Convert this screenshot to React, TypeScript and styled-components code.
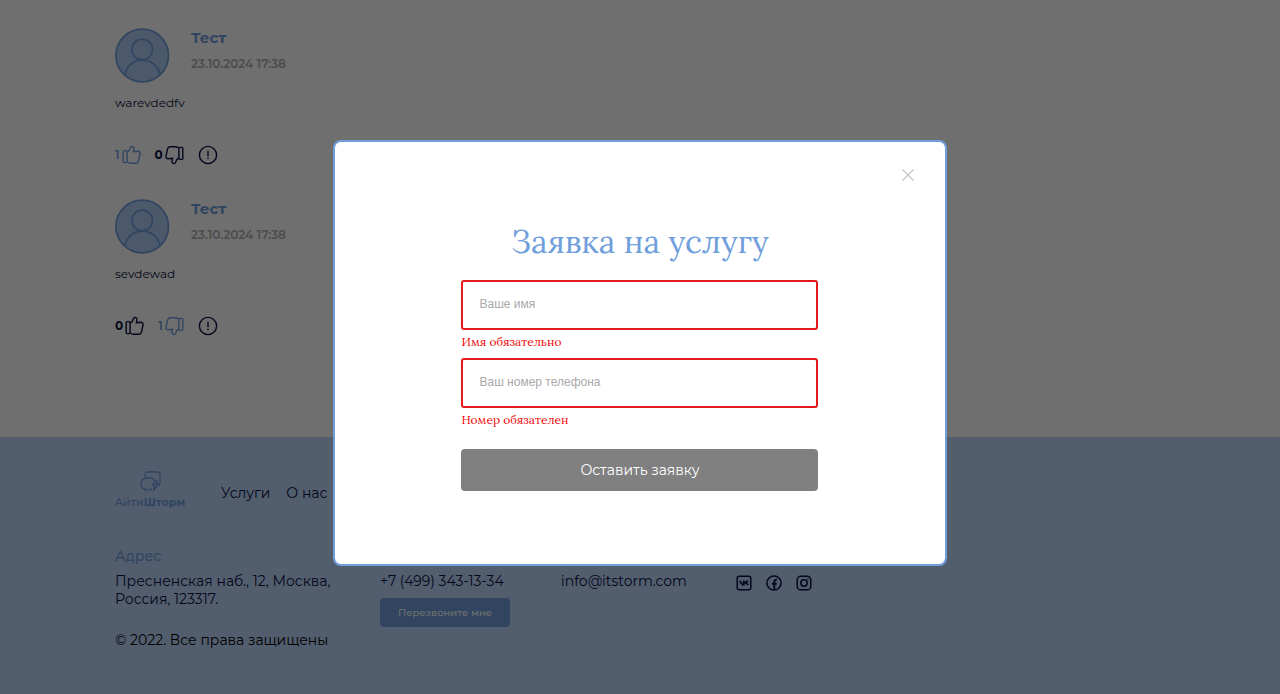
import React from "react";
import styled, { createGlobalStyle } from "styled-components";

const sans = `Montserrat, Inter, "Noto Sans", sans-serif`;
const serif = `Lora, "Liberation Serif", serif`;
const blue = "#709fdc";
const ink = "#0e1142";

const GlobalStyle = createGlobalStyle`
  *, *::before, *::after { box-sizing: border-box; }
  body { margin: 0; background: #fff; color: ${ink}; font-family: ${sans}; font-size: 14px; }
  button, input { font: inherit; }
  p, h2, h3, ul { margin: 0; padding: 0; }
  a { color: inherit; text-decoration: none; }
`;

const Page = styled.div`
  min-height: 100vh;
  display: flex;
  flex-direction: column;
`;

const Reviews = styled.main`
  display: flex;
  flex-direction: column;
  gap: 34px;
  padding: 28px 115px 101px;
`;

const Review = styled.article`
  display: flex;
  flex-direction: column;
`;

const Author = styled.header`
  display: flex;
  gap: 21px;
`;

const AuthorText = styled.div`
  display: flex;
  flex-direction: column;
  gap: 8px;
`;

const Name = styled.h3`
  color: ${blue};
  font-size: 15px;
  line-height: 20px;
  font-weight: 700;
`;

const PostedAt = styled.time`
  color: #afafaf;
  font-size: 12px;
  line-height: 16px;
  font-weight: 600;
`;

const Message = styled.p`
  margin-top: 11px;
  font-size: 12px;
  line-height: 18px;
`;

const Reactions = styled.div`
  display: flex;
  align-items: center;
  gap: 14px;
  margin-top: 33px;
`;

const Reaction = styled.button<{ $active?: boolean }>`
  display: flex;
  align-items: center;
  gap: 2px;
  padding: 0;
  border: 0;
  background: none;
  color: ${(p) => (p.$active ? blue : ink)};
  font-size: 12px;
  line-height: 20px;
  font-weight: ${(p) => (p.$active ? 600 : 700)};
  svg { display: block; }
`;

const Footer = styled.footer`
  flex: 1;
  display: flex;
  flex-direction: column;
  padding: 33px 115px 45px;
  background: #bdd6fd;
`;

const FooterTop = styled.div`
  display: flex;
  align-items: center;
  gap: 36px;
`;

const Logo = styled.a`
  display: flex;
  flex-direction: column;
  align-items: center;
  width: 70px;
  color: ${blue};
  font-size: 11px;
  line-height: 16px;
  font-weight: 500;
  b { font-weight: 700; }
`;

const Nav = styled.nav`
  display: flex;
  gap: 16px;
  padding-top: 6px;
  line-height: 18px;
`;

const Contacts = styled.div`
  display: grid;
  grid-template-columns: 265px 181px 175px auto;
  justify-content: start;
  row-gap: 7px;
  margin-top: 37px;
  line-height: 18px;
`;

const ContactTitle = styled.h3`
  grid-column: 1 / -1;
  color: ${blue};
  font-size: 14px;
  font-weight: 500;
`;

const CallBack = styled.button`
  display: block;
  width: 130px;
  height: 29px;
  margin-top: 8px;
  padding: 0;
  border: 0;
  border-radius: 4px;
  background: ${blue};
  color: #fff;
  font-size: 10px;
  font-weight: 500;
`;

const Social = styled.div`
  display: flex;
  gap: 14px;
  padding-top: 3px;
  svg { display: block; }
`;

const Copyright = styled.p`
  margin-top: 4px;
  line-height: 18px;
  color: #000;
`;

const Backdrop = styled.div`
  position: fixed;
  inset: 0;
  display: flex;
  align-items: center;
  justify-content: center;
  padding-top: 11px;
  background: rgba(0, 0, 0, 0.565);
`;

const Dialog = styled.section`
  display: flex;
  flex-direction: column;
  width: 48%;
  min-width: 400px;
  padding: 25px 29px 73px;
  border: 2px solid ${blue};
  border-radius: 8px;
  background: #fff;
`;

const Close = styled.button`
  align-self: flex-end;
  padding: 1px;
  border: 0;
  background: none;
  color: #c4c4c4;
  svg { display: block; }
`;

const Form = styled.form`
  display: flex;
  flex-direction: column;
  align-self: center;
  width: 357px;
  max-width: 100%;
  margin-top: 39px;
`;

const Title = styled.h2`
  margin-bottom: 18px;
  color: ${blue};
  font-family: ${serif};
  font-size: 32px;
  line-height: 40px;
  font-weight: 400;
  text-align: center;
  white-space: nowrap;
`;

const Field = styled.input`
  width: 100%;
  height: 50px;
  padding: 0 16px 2px;
  border: 2px solid #e3191b;
  border-radius: 3px;
  background: #fff;
  font-family: "Liberation Sans", sans-serif;
  font-size: 12px;
  &::placeholder { color: #a9a9a9; opacity: 1; }
`;

const FieldError = styled.p`
  margin: 4px 0 8px;
  color: #f00b0b;
  font-family: ${serif};
  font-size: 12px;
  line-height: 16px;
`;

const Submit = styled.button`
  height: 42px;
  margin-top: 13px;
  border: 0;
  border-radius: 4px;
  background: #808080;
  color: #fff;
  font-size: 14px;
`;

const Avatar = () => (
  <svg width="55" height="55" viewBox="0 0 55 55" fill="none" stroke={blue} strokeWidth="1.7" aria-hidden="true">
    <circle cx="27.2" cy="27.5" r="26.3" fill="#afcdf5" />
    <circle cx="27.2" cy="21.5" r="10.3" />
    <path d="M10 46.5 C12 37 19 32.2 27.2 32.2 S43 37 45 46.5" />
  </svg>
);

const Thumb = ({ down }: { down?: boolean }) => (
  <svg width="19" height="20" viewBox="0 0 19 20" fill="none" stroke="currentColor" strokeWidth="1.4" strokeLinejoin="round" aria-hidden="true">
    <g transform={down ? "rotate(180 9.5 10)" : undefined}>
      <rect x="1.2" y="5.6" width="3.9" height="12" rx="1" />
      <path d="M5.1 7.3 C7.1 6.2 8.1 4.4 8.4 2.6 C8.8 1 11.8 .9 12 3.3 C12.1 4.5 11.6 5.6 11.3 6.8 L15.6 6.2 C17.5 6.2 18.3 7.4 18 9 L16.5 15.8 C16.1 17.4 15.3 18.3 13.7 18.3 H8.4 C7 18.3 6.3 17.7 5.1 16.8" />
    </g>
  </svg>
);

const Alert = () => (
  <svg width="20" height="20" viewBox="0 0 20 20" fill="none" stroke="currentColor" strokeWidth="1.4" aria-hidden="true">
    <circle cx="10" cy="10" r="8.6" />
    <path d="M10 5.8 V11.2 M10 12.6 V14.1" />
  </svg>
);

const LogoMark = () => (
  <svg width="22" height="24" viewBox="0 0 22 24" fill="none" stroke="currentColor" strokeWidth="1.3" strokeLinejoin="round" aria-hidden="true">
    <path d="M6 7.5 V5 Q6 2 9 2 H18 Q21 2 21 5 V12 Q21 14.5 19.5 16" />
    <path d="M15.5 11 Q15 8 11.5 8 H7.5 Q2 8.5 2 14 Q2 18.5 6.5 19 V21 L9.5 19.5 H13" />
    <path d="M17 10.5 L13.5 15 H15.8 L14.5 20.5 L19.8 14 H17.2 L18.5 10.5 Z" />
  </svg>
);

const VkIcon = () => (
  <svg width="16" height="16" viewBox="0 0 16 16" fill="none" stroke="currentColor" strokeWidth="1.5" aria-hidden="true">
    <rect x="1.2" y="1.2" width="13.6" height="13.6" rx="2" />
    <path d="M4 5.6 Q5 9.6 7.7 9.8 V5.6 M12 5.6 Q11 7.5 8 7.6 Q11 7.8 12.2 10" strokeWidth="1.8" />
  </svg>
);

const FacebookIcon = () => (
  <svg width="16" height="16" viewBox="0 0 16 16" fill="none" stroke="currentColor" strokeWidth="1.5" aria-hidden="true">
    <circle cx="8" cy="8" r="7.1" />
    <path d="M8.3 15 V6.8 Q8.3 4.6 10.8 4.8 M5.9 8.7 H10.7" strokeWidth="1.9" />
  </svg>
);

const InstagramIcon = () => (
  <svg width="16" height="16" viewBox="0 0 16 16" fill="none" stroke="currentColor" strokeWidth="1.5" aria-hidden="true">
    <rect x="1.2" y="1.2" width="13.6" height="13.6" rx="3.6" />
    <circle cx="8" cy="8" r="3.2" />
    <circle cx="11.9" cy="4.1" r=".8" fill="currentColor" stroke="none" />
  </svg>
);

type ReviewData = { text: string; likes: number; dislikes: number; mine: "like" | "dislike" };

const reviews: ReviewData[] = [
  { text: "warevdedfv", likes: 1, dislikes: 0, mine: "like" },
  { text: "sevdewad", likes: 0, dislikes: 1, mine: "dislike" },
];

const ReviewCard = ({ text, likes, dislikes, mine }: ReviewData) => (
  <Review>
    <Author>
      <Avatar />
      <AuthorText>
        <Name>Тест</Name>
        <PostedAt dateTime="2024-10-23T17:38">23.10.2024 17:38</PostedAt>
      </AuthorText>
    </Author>
    <Message>{text}</Message>
    <Reactions>
      <Reaction type="button" $active={mine === "like"}>{likes}<Thumb /></Reaction>
      <Reaction type="button" $active={mine === "dislike"}>{dislikes}<Thumb down /></Reaction>
      <Reaction type="button"><Alert /></Reaction>
    </Reactions>
  </Review>
);

export default function App() {
  return (
    <>
      <GlobalStyle />
      <Page>
        <Reviews>
          {reviews.map((r) => <ReviewCard key={r.text} {...r} />)}
        </Reviews>
        <Footer>
          <FooterTop>
            <Logo href="#"><LogoMark /><span>Айти<b>Шторм</b></span></Logo>
            <Nav>
              <a href="#services">Услуги</a>
              <a href="#about">О нас</a>
            </Nav>
          </FooterTop>
          <Contacts>
            <ContactTitle>Адрес</ContactTitle>
            <p>Пресненская наб., 12, Москва,<br />Россия, 123317.</p>
            <div>
              <a href="tel:+74993431334">+7 (499) 343-13-34</a>
              <CallBack type="button">Перезвоните мне</CallBack>
            </div>
            <a href="mailto:info@itstorm.com">info@itstorm.com</a>
            <Social>
              <a href="#vk" aria-label="VK"><VkIcon /></a>
              <a href="#facebook" aria-label="Facebook"><FacebookIcon /></a>
              <a href="#instagram" aria-label="Instagram"><InstagramIcon /></a>
            </Social>
          </Contacts>
          <Copyright>© 2022. Все права защищены</Copyright>
        </Footer>
      </Page>
      <Backdrop>
        <Dialog role="dialog" aria-modal="true" aria-labelledby="request-title">
          <Close type="button" aria-label="Закрыть">
            <svg width="14" height="14" viewBox="0 0 14 14" fill="none" stroke="currentColor" strokeWidth="1.2">
              <path d="M1.5 1.5 L12.5 12.5 M12.5 1.5 L1.5 12.5" />
            </svg>
          </Close>
          <Form noValidate onSubmit={(e) => e.preventDefault()}>
            <Title id="request-title">Заявка на услугу</Title>
            <Field type="text" placeholder="Ваше имя" aria-label="Ваше имя" aria-invalid="true" aria-describedby="name-error" />
            <FieldError id="name-error">Имя обязательно</FieldError>
            <Field type="tel" placeholder="Ваш номер телефона" aria-label="Ваш номер телефона" aria-invalid="true" aria-describedby="phone-error" />
            <FieldError id="phone-error">Номер обязателен</FieldError>
            <Submit type="submit">Оставить заявку</Submit>
          </Form>
        </Dialog>
      </Backdrop>
    </>
  );
}
